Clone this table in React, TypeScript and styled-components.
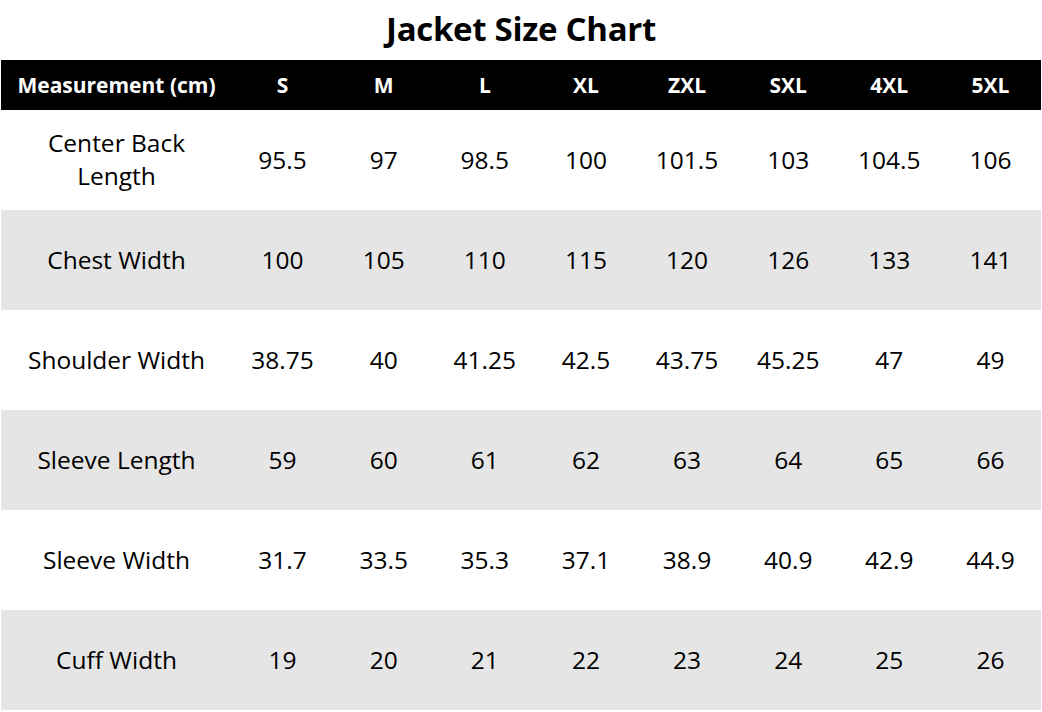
import React from "react";
import styled, { createGlobalStyle } from "styled-components";

const Global = createGlobalStyle`
  html, body { margin: 0; padding: 0; background: #ffffff; }
  body { font-family: "Open Sans", "Noto Sans", sans-serif; color: #000; }
`;

const Page = styled.div`
  width: 1042px;
  height: 712px;
  overflow: hidden;
  padding: 0 1px;
  box-sizing: border-box;
`;

const Title = styled.h1`
  margin: 0;
  height: 60px;
  padding-bottom: 3px;
  box-sizing: border-box;
  display: flex;
  align-items: center;
  justify-content: center;
  font-size: 33px;
  font-weight: 700;
  letter-spacing: -0.3px;
`;

const Table = styled.div`
  display: grid;
  grid-template-columns: 231px repeat(8, 1fr);
  width: 1040px;
`;

const HeadCell = styled.div`
  height: 50px;
  background: #000;
  color: #fff;
  font-weight: 700;
  font-size: 21px;
  display: flex;
  align-items: center;
  justify-content: center;
  white-space: nowrap;
`;

const Cell = styled.div<{ $shade: boolean }>`
  height: 100px;
  padding-bottom: 2px;
  box-sizing: border-box;
  background: ${(p) => (p.$shade ? "#e5e5e5" : "#ffffff")};
  font-size: 24.5px;
  line-height: 33px;
  display: flex;
  align-items: center;
  justify-content: center;
  text-align: center;
`;

const sizes = ["S", "M", "L", "XL", "ZXL", "SXL", "4XL", "5XL"];

const rows: { label: React.ReactNode; values: string[] }[] = [
  { label: <>Center Back<br />Length</>, values: ["95.5", "97", "98.5", "100", "101.5", "103", "104.5", "106"] },
  { label: "Chest Width", values: ["100", "105", "110", "115", "120", "126", "133", "141"] },
  { label: "Shoulder Width", values: ["38.75", "40", "41.25", "42.5", "43.75", "45.25", "47", "49"] },
  { label: "Sleeve Length", values: ["59", "60", "61", "62", "63", "64", "65", "66"] },
  { label: "Sleeve Width", values: ["31.7", "33.5", "35.3", "37.1", "38.9", "40.9", "42.9", "44.9"] },
  { label: "Cuff Width", values: ["19", "20", "21", "22", "23", "24", "25", "26"] },
];

export default function App() {
  return (
    <Page>
      <Global />
      <Title>Jacket Size Chart</Title>
      <Table>
        <HeadCell>Measurement (cm)</HeadCell>
        {sizes.map((s) => (
          <HeadCell key={s}>{s}</HeadCell>
        ))}
        {rows.map((r, i) => (
          <React.Fragment key={i}>
            <Cell $shade={i % 2 === 1}>{r.label}</Cell>
            {r.values.map((v, j) => (
              <Cell key={j} $shade={i % 2 === 1}>{v}</Cell>
            ))}
          </React.Fragment>
        ))}
      </Table>
    </Page>
  );
}
